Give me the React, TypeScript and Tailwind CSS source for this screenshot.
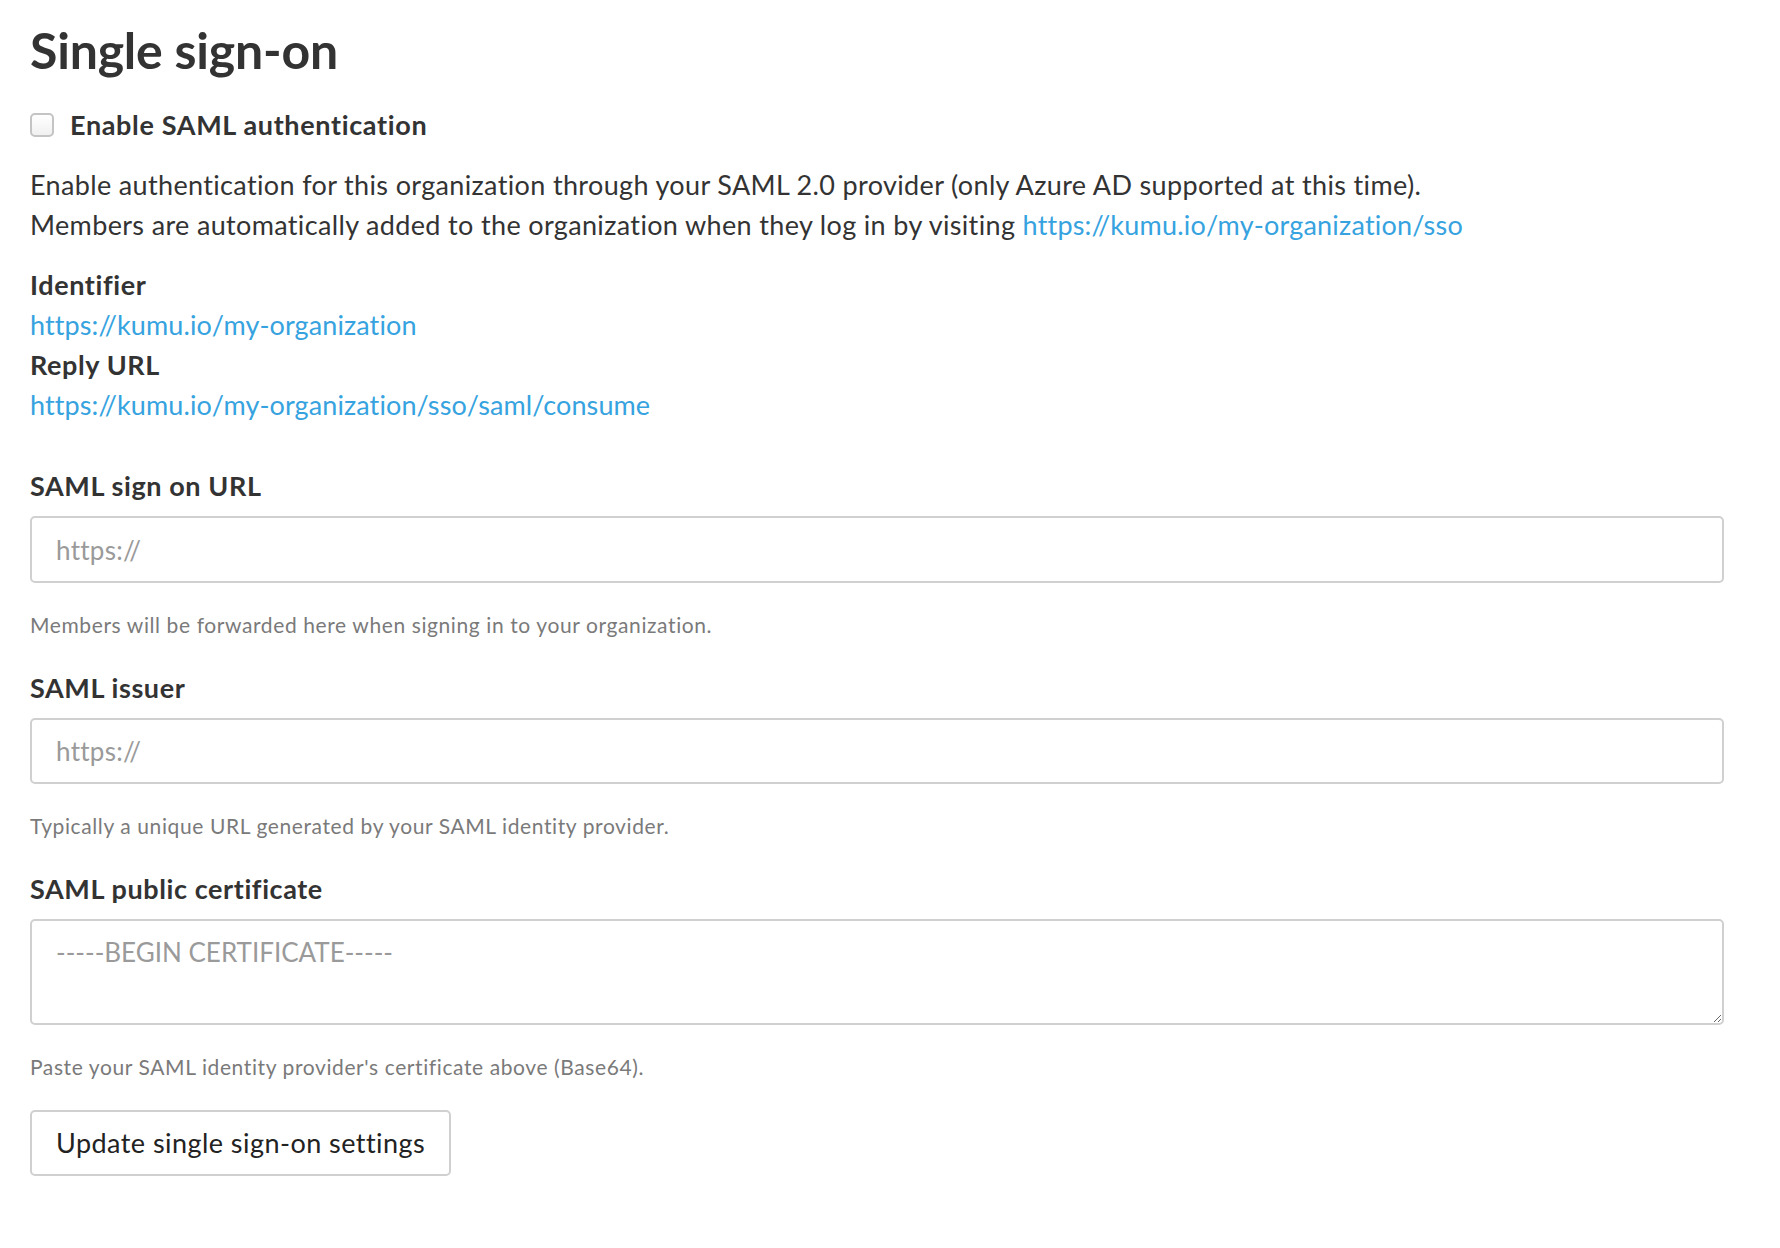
export default function App() {
  return (
    <div
      className="min-h-screen bg-white pl-[30px] pr-[56px] pt-[20px] text-[#333333]"
      style={{ fontFamily: "Lato, 'Open Sans', sans-serif" }}
    >
      <h1 className="text-[50px] font-bold leading-[60px] tracking-[-0.2px]">Single sign-on</h1>

      <label className="mt-[25px] flex h-[40px] items-center gap-[16px]">
        <input
          type="checkbox"
          className="h-[24px] w-[24px] appearance-none rounded-[5px] border-2 border-[#c4c4c4] bg-gradient-to-b from-white to-[#f0f0f0]"
        />
        <span className="text-[27px] font-bold tracking-[0.65px]">Enable SAML authentication</span>
      </label>

      <div className="mt-[20px] text-[27px] leading-[40px] tracking-[0.35px]">
        <p>
          Enable authentication for this organization through your SAML 2.0 provider (only Azure AD supported at this time).
        </p>
        <p>
          Members are automatically added to the organization when they log in by visiting{" "}
          <a href="#" className="tracking-[0.2px] text-[#36a3e0]">
            https://kumu.io/my-organization/sso
          </a>
        </p>
      </div>

      <div className="mt-[20px] text-[27px] leading-[40px]">
        <div className="font-bold tracking-[0.6px]">Identifier</div>
        <a href="#" className="block tracking-[0.1px] text-[#36a3e0]">
          https://kumu.io/my-organization
        </a>
        <div className="font-bold tracking-[0.6px]">Reply URL</div>
        <a href="#" className="block tracking-[0.1px] text-[#36a3e0]">
          https://kumu.io/my-organization/sso/saml/consume
        </a>
      </div>

      <Field
        className="mt-[41px]"
        label="SAML sign on URL"
        hint="Members will be forwarded here when signing in to your organization."
      >
        <input
          placeholder="https://"
          className="h-[67px] w-full rounded-[5px] border-2 border-[#d0d0d0] px-[24px] text-[26px] tracking-[0.3px] placeholder:text-[#9a9a9a] focus:outline-none"
        />
      </Field>

      <Field
        className="mt-[28px]"
        label="SAML issuer"
        hint="Typically a unique URL generated by your SAML identity provider."
      >
        <input
          placeholder="https://"
          className="h-[66px] w-full rounded-[5px] border-2 border-[#d0d0d0] px-[24px] text-[26px] tracking-[0.3px] placeholder:text-[#9a9a9a] focus:outline-none"
        />
      </Field>

      <Field
        className="mt-[28px]"
        label="SAML public certificate"
        hint="Paste your SAML identity provider's certificate above (Base64)."
      >
        <textarea
          placeholder="-----BEGIN CERTIFICATE-----"
          className="block h-[106px] w-full rounded-[5px] border-2 border-[#d0d0d0] px-[24px] py-[13px] text-[26px] leading-[36px] placeholder:text-[#9a9a9a] focus:outline-none"
        />
      </Field>

      <button className="mt-[28px] h-[66px] rounded-[5px] border-2 border-[#d0d0d0] bg-white px-[24px] text-[27px] tracking-[0.45px] text-[#222222]">
        Update single sign-on settings
      </button>
    </div>
  );
}

function Field({
  label,
  hint,
  className,
  children,
}: {
  label: string;
  hint: string;
  className?: string;
  children: React.ReactNode;
}) {
  return (
    <div className={className}>
      <div className="text-[27px] font-bold leading-[40px] tracking-[0.6px]">{label}</div>
      <div className="mt-[10px]">{children}</div>
      <div className="mt-[27px] text-[21px] leading-[30px] tracking-[0.6px] text-[#7a7a7a]">{hint}</div>
    </div>
  );
}
